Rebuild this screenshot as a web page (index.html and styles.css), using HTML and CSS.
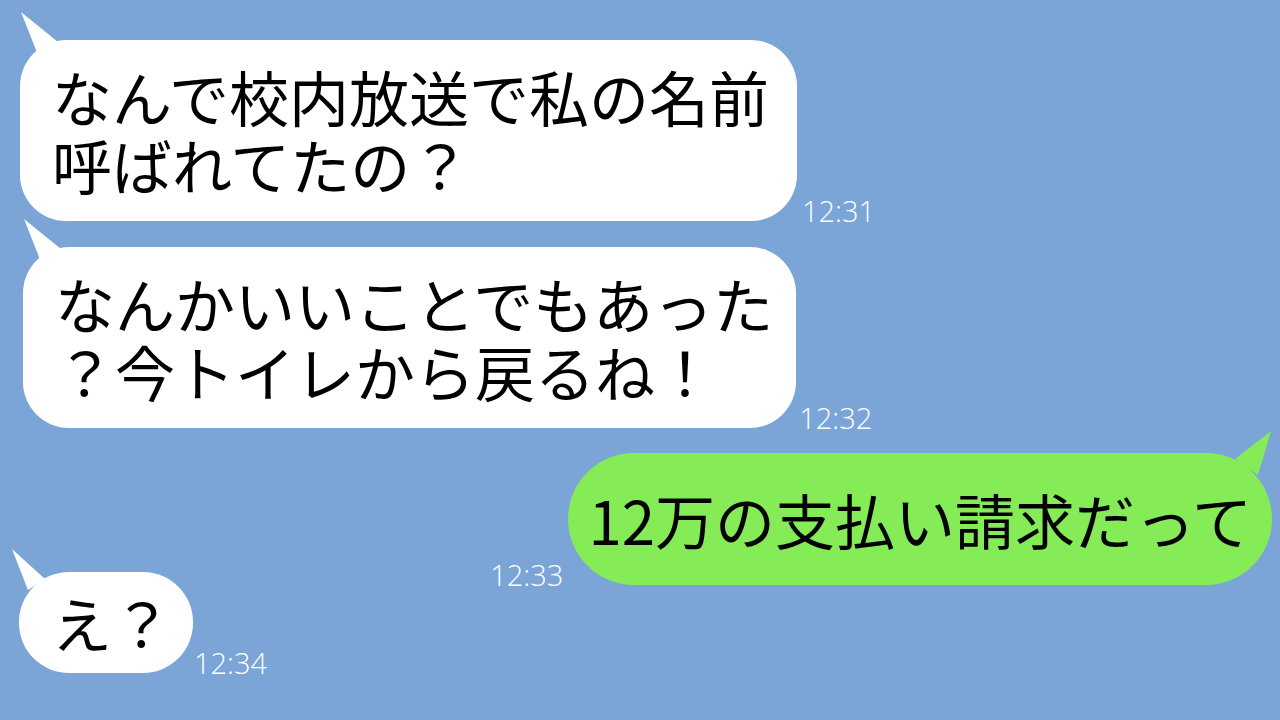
FILE: index.html
```html
<!DOCTYPE html>
<html lang="ja">
<head>
    <meta charset="UTF-8">
    <meta name="viewport" content="width=device-width, initial-scale=1.0">
    <title>トーク</title>
    <link rel="stylesheet" href="styles.css">
</head>
<body>
    <div class="chat">
        <div class="row row-first">
            <div class="bubble">なんで校内放送で私の名前<br>呼ばれてたの？</div>
            <span class="time">12:31</span>
        </div>
        <div class="row row-second">
            <div class="bubble">なんかいいことでもあった<br>？今トイレから戻るね！</div>
            <span class="time">12:32</span>
        </div>
        <div class="row row-mine">
            <span class="time">12:33</span>
            <div class="bubble mine">12万の支払い請求だって</div>
        </div>
        <div class="row row-last">
            <div class="bubble short">え？</div>
            <span class="time">12:34</span>
        </div>
    </div>
</body>
</html>
```

FILE: styles.css
```css
body {
    margin: 0;
    background-color: #7aa5d6;
    font-family: "Noto Sans CJK JP", "Noto Sans", sans-serif;
    width: 1280px;
    height: 720px;
    overflow: hidden;
}
.chat {
    display: flex;
    flex-direction: column;
    padding: 40px 8px 0 20px;
}
.row {
    display: flex;
    align-items: flex-end;
    gap: 5px;
}
.row-second {
    margin-top: 26px;
    padding-left: 3px;
    gap: 3px;
}
.row-second .bubble {
    padding-right: 23px;
}
.row-mine {
    margin-top: 25px;
    justify-content: flex-end;
}
.row-last {
    margin-top: -13px;
    margin-left: -1px;
    gap: 1px;
}
.bubble {
    position: relative;
    background-color: #fff;
    color: #000;
    font-size: 60px;
    line-height: 68px;
    padding: 22px 28px 23px 32px;
    border-radius: 46px;
    white-space: nowrap;
}
.bubble::before {
    content: '';
    position: absolute;
    left: -10px;
    top: -32px;
    width: 60px;
    height: 60px;
    background-color: inherit;
    clip-path: polygon(11px 4px, 48px 34px, 28px 47px);
}
.bubble.mine {
    background-color: #85ec57;
    padding: 32px 20px;
    border-radius: 66px;
}
.bubble.mine::before {
    left: auto;
    right: -10px;
    clip-path: polygon(49px 10px, 36px 54px, 13px 38px);
}
.bubble.short {
    padding: 16px 21px 17px 33px;
    border-radius: 50px;
}
.bubble.short::before {
    clip-path: polygon(3px 9px, 36px 39px, 19px 50px);
}
.time {
    font-family: "Open Sans", "Noto Sans", sans-serif;
    font-weight: 300;
    font-size: 29px;
    line-height: 1;
    color: #fff;
    margin-bottom: -4px;
}
```
